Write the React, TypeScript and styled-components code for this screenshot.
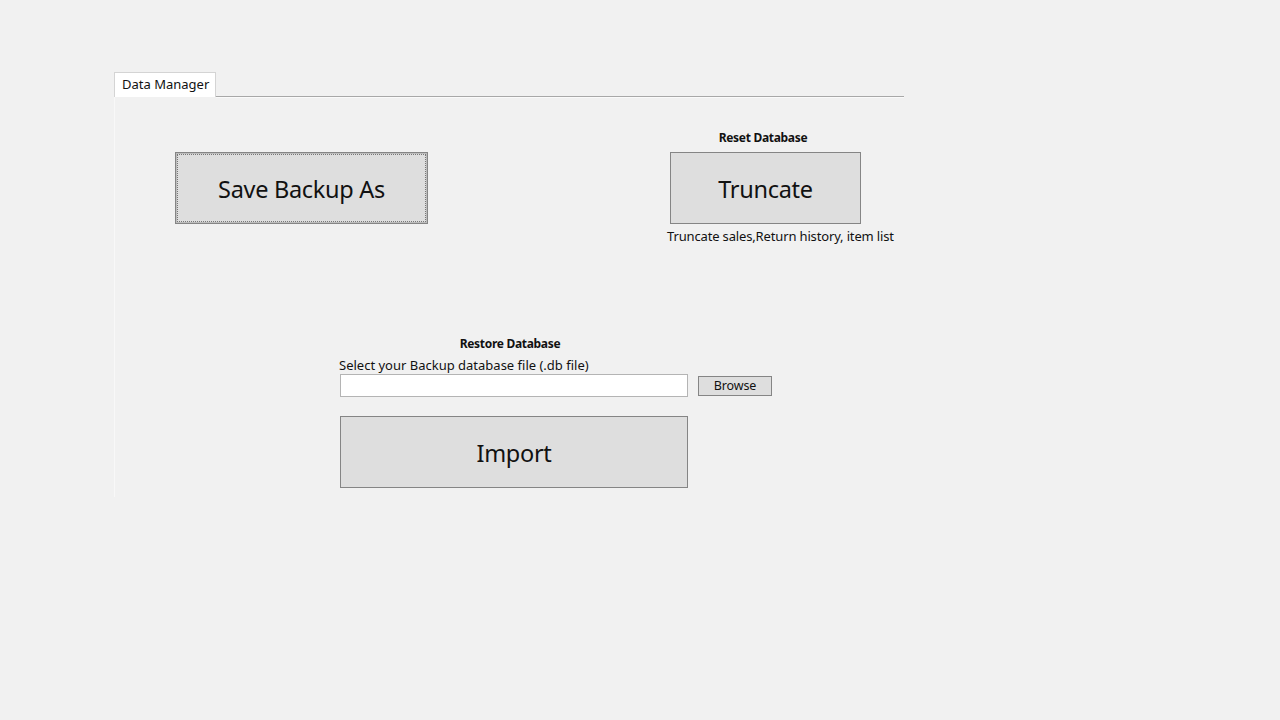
import React from 'react'
import styled, { createGlobalStyle } from 'styled-components'

const GlobalStyle = createGlobalStyle`
  html, body {
    margin: 0;
    background: #f1f1f1;
    font-family: "Noto Sans", "Open Sans", sans-serif;
    color: #111;
  }
`

const Window = styled.div`
  width: 1280px;
  height: 720px;
  padding: 72px 0 0 114px;
  box-sizing: border-box;
`

const TabControl = styled.div`
  width: 790px;
`

const TabStrip = styled.div`
  display: flex;
  height: 25px;
`

const Tab = styled.div`
  background: #fff;
  border: 1px solid #d4d4d4;
  border-bottom: none;
  padding: 0 6px 2px 7px;
  font-size: 13px;
  line-height: 22px;
  letter-spacing: 0;
`

const StripRest = styled.div`
  flex: 1;
  border-bottom: 1px solid #a8a8a8;
  box-shadow: 0 1px 0 #fafafa;
`

const TabPage = styled.div`
  height: 400px;
  border-left: 1px solid #f8f8f8;
  padding: 33px 0 0 60px;
  box-sizing: border-box;
`

const TopRow = styled.div`
  display: flex;
  align-items: flex-start;
  gap: 242px;
`

const Group = styled.div`
  display: flex;
  flex-direction: column;
`

const GroupTitle = styled.div<{ $width: number }>`
  width: ${p => p.$width}px;
  text-align: center;
  font-size: 12px;
  font-weight: 700;
  line-height: 16px;
  letter-spacing: -0.3px;
  margin-bottom: 6px;
`

const BigButton = styled.button<{ $width: number; $focused?: boolean }>`
  width: ${p => p.$width}px;
  height: 72px;
  margin-top: ${p => (p.$focused ? '22px' : '0')};
  background: #dedede;
  border: 1px solid #858585;
  font-family: "Noto Sans", "Open Sans", sans-serif;
  font-size: 23.5px;
  letter-spacing: -0.3px;
  color: #111;
  padding: 2px 0 0;
  outline: ${p => (p.$focused ? '1px dotted #777' : 'none')};
  outline-offset: -3px;
  box-shadow: ${p => (p.$focused ? 'inset 0 0 0 1px #bdbdbd' : 'none')};
`

const Caption = styled.div`
  margin: 4px 0 0 -3px;
  font-size: 13px;
  line-height: 17px;
  white-space: nowrap;
  letter-spacing: -0.15px;
`

const RestoreSection = styled.div`
  display: flex;
  flex-direction: column;
  margin: 91px 0 0 165px;
`

const FieldLabel = styled.div`
  margin-left: -1px;
  font-size: 13px;
  line-height: 15px;
  letter-spacing: 0;
  margin-bottom: 1px;
`

const FileRow = styled.div`
  display: flex;
  align-items: center;
  gap: 10px;
  margin-bottom: 19px;
`

const FileInput = styled.input`
  width: 348px;
  height: 23px;
  box-sizing: border-box;
  background: #fff;
  border: 1px solid #b4b4b4;
  margin: 0;
`

const SmallButton = styled.button`
  width: 74px;
  height: 20px;
  background: #dedede;
  border: 1px solid #858585;
  padding: 0;
  font-family: "Noto Sans", "Open Sans", sans-serif;
  font-size: 12.5px;
  letter-spacing: -0.1px;
  color: #111;
`

export default function App() {
  return (
    <>
      <GlobalStyle />
      <Window>
        <TabControl>
          <TabStrip>
            <Tab>Data Manager</Tab>
            <StripRest />
          </TabStrip>
          <TabPage>
            <TopRow>
              <BigButton $width={253} $focused>
                Save Backup As
              </BigButton>
              <Group>
                <GroupTitle $width={186}>Reset Database</GroupTitle>
                <BigButton $width={191}>Truncate</BigButton>
                <Caption>Truncate sales,Return history, item list</Caption>
              </Group>
            </TopRow>
            <RestoreSection>
              <GroupTitle $width={340}>Restore Database</GroupTitle>
              <FieldLabel>Select your Backup database file (.db file)</FieldLabel>
              <FileRow>
                <FileInput type="text" />
                <SmallButton>Browse</SmallButton>
              </FileRow>
              <BigButton $width={348}>Import</BigButton>
            </RestoreSection>
          </TabPage>
        </TabControl>
      </Window>
    </>
  )
}
